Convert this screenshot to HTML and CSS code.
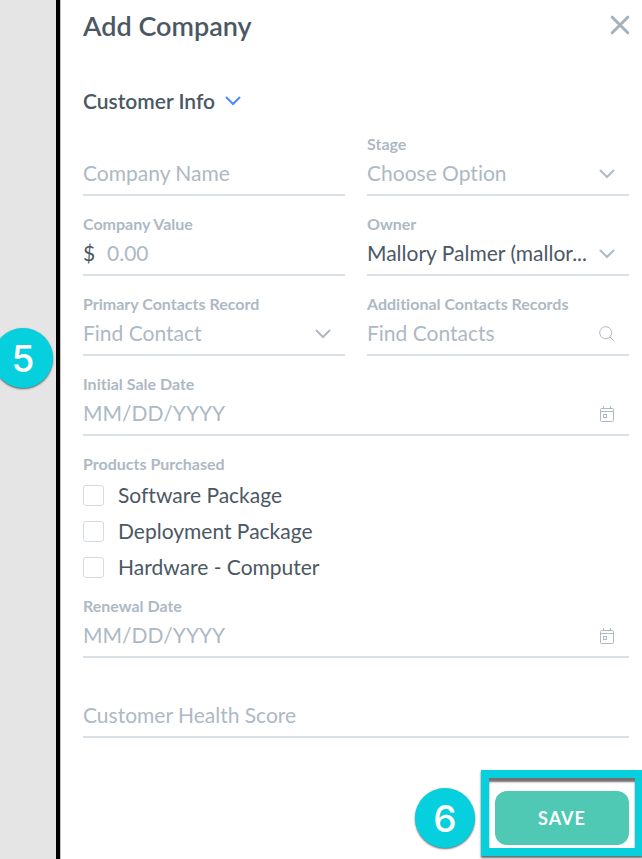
FILE: index.html
```
<!DOCTYPE html>
<html lang="en">
<head>
    <meta charset="UTF-8">
    <meta name="viewport" content="width=device-width, initial-scale=1.0">
    <title>Add Company</title>
    <link rel="stylesheet" href="styles.css">
</head>
<body>
    <div class="page">
        <aside class="backdrop">
            <span class="step step-five">5</span>
        </aside>
        <main class="panel">
            <header class="panel-header">
                <h1>Add Company</h1>
                <button type="button" class="close" aria-label="Close">
                    <svg width="20" height="20" viewBox="0 0 20 20"><path d="M2.2 2.2l15.6 15.6M17.8 2.2L2.2 17.8"/></svg>
                </button>
            </header>
            <h2>
                <button type="button" class="section-toggle">
                    Customer Info
                    <svg class="chevron" width="16" height="10" viewBox="0 0 16 10"><path d="M1.5 1.5l6.5 6.5 6.5-6.5"/></svg>
                </button>
            </h2>

            <form class="company-form">
                <div class="field">
                    <div class="control no-label">
                        <input type="text" id="company-name" aria-label="Company Name" placeholder="Company Name">
                    </div>
                </div>
                <div class="field">
                    <label for="stage">Stage</label>
                    <div class="control">
                        <select id="stage" class="empty">
                            <option>Choose Option</option>
                        </select>
                        <svg class="chevron" width="16" height="10" viewBox="0 0 16 10"><path d="M1.5 1.5l6.5 6.5 6.5-6.5"/></svg>
                    </div>
                </div>
                <div class="field">
                    <label for="company-value">Company Value</label>
                    <div class="control">
                        <span class="currency">$</span>
                        <input type="text" id="company-value" placeholder="0.00">
                    </div>
                </div>
                <div class="field">
                    <label for="owner">Owner</label>
                    <div class="control">
                        <select id="owner">
                            <option>Mallory Palmer (mallor...</option>
                        </select>
                        <svg class="chevron" width="16" height="10" viewBox="0 0 16 10"><path d="M1.5 1.5l6.5 6.5 6.5-6.5"/></svg>
                    </div>
                </div>
                <div class="field">
                    <label for="primary-contact">Primary Contacts Record</label>
                    <div class="control">
                        <select id="primary-contact" class="empty">
                            <option>Find Contact</option>
                        </select>
                        <svg class="chevron" width="16" height="10" viewBox="0 0 16 10"><path d="M1.5 1.5l6.5 6.5 6.5-6.5"/></svg>
                    </div>
                </div>
                <div class="field">
                    <label for="more-contacts">Additional Contacts Records</label>
                    <div class="control">
                        <input type="text" id="more-contacts" placeholder="Find Contacts">
                        <svg class="icon" width="16" height="16" viewBox="0 0 16 16"><circle cx="6.7" cy="6.7" r="6"/><path d="M11 11l4.4 4.4"/></svg>
                    </div>
                </div>
                <div class="field wide">
                    <label for="sale-date">Initial Sale Date</label>
                    <div class="control">
                        <input type="text" id="sale-date" placeholder="MM/DD/YYYY">
                        <svg class="icon" width="16" height="16" viewBox="0 0 16 16"><rect x="1.5" y="2.5" width="13" height="13" rx="1"/><path d="M1.5 5.5h13M4.5 0v3M11.5 0v3"/><rect x="4.5" y="8.5" width="3" height="3"/></svg>
                    </div>
                </div>
                <fieldset class="field wide">
                    <legend>Products Purchased</legend>
                    <div class="options">
                        <label class="option"><input type="checkbox"> Software Package</label>
                        <label class="option"><input type="checkbox"> Deployment Package</label>
                        <label class="option"><input type="checkbox"> Hardware - Computer</label>
                    </div>
                </fieldset>
                <div class="field wide">
                    <label for="renewal-date">Renewal Date</label>
                    <div class="control">
                        <input type="text" id="renewal-date" placeholder="MM/DD/YYYY">
                        <svg class="icon" width="16" height="16" viewBox="0 0 16 16"><rect x="1.5" y="2.5" width="13" height="13" rx="1"/><path d="M1.5 5.5h13M4.5 0v3M11.5 0v3"/><rect x="4.5" y="8.5" width="3" height="3"/></svg>
                    </div>
                </div>
                <div class="field wide">
                    <div class="control no-label">
                        <input type="text" id="health-score" aria-label="Customer Health Score" placeholder="Customer Health Score">
                    </div>
                </div>
                <footer class="actions wide">
                    <span class="step">6</span>
                    <div class="save-wrap">
                        <button type="submit" class="save">SAVE</button>
                        <div class="highlight"></div>
                    </div>
                </footer>
            </form>
        </main>
    </div>
</body>
</html>
```
FILE: styles.css
```
* {
    margin: 0;
    padding: 0;
    box-sizing: border-box;
}

body {
    font-family: 'Lato', sans-serif;
    font-size: 21px;
    font-variant-ligatures: none;
    color: #4b5863;
    background: #fff;
}

button, input, select {
    font: inherit;
    font-variant-ligatures: none;
    color: inherit;
    background: none;
    border: none;
    outline: none;
}

svg {
    fill: none;
    stroke: #adb9c4;
    flex: none;
}

.page {
    display: grid;
    grid-template-columns: 56px 1fr;
    min-height: 100vh;
    overflow: hidden;
}

.backdrop {
    position: relative;
    background: #e5e5e5;
}

.panel {
    border-left: 4px solid #000;
    box-shadow: inset 1px 0 #c4c4c4;
    padding: 0 13px 0 23px;
}

.panel-header {
    display: flex;
    justify-content: space-between;
    align-items: center;
    height: 50px;
}

h1 {
    font-size: 27px;
    font-weight: 600;
}

.close {
    display: flex;
    margin-right: -1px;
}

.close svg {
    stroke: #a5b1bc;
    stroke-width: 3;
    stroke-linecap: round;
}

h2 {
    font-size: 21px;
    font-weight: 600;
    padding-top: 35px;
    height: 66px;
}

.section-toggle {
    display: flex;
    align-items: center;
    gap: 10px;
    line-height: 32px;
}

.chevron {
    stroke-width: 2;
    stroke-linecap: round;
}

.section-toggle .chevron {
    stroke: #4a8cff;
}

.company-form {
    display: grid;
    grid-template-columns: 1fr 1fr;
    column-gap: 22px;
}

.wide {
    grid-column: 1 / -1;
}

.field {
    border: none;
    padding-top: 18px;
    min-width: 0;
}

.field > label, legend {
    display: block;
    font-size: 16px;
    font-weight: 700;
    line-height: 20px;
    color: #adb9c4;
}

.control {
    display: flex;
    align-items: center;
    height: 42px;
    padding-right: 14px;
    border-bottom: 2px solid #dae1e4;
}

.no-label {
    margin-top: 20px;
}

.control input, .control select {
    flex: 1;
    min-width: 0;
    height: 40px;
    padding-bottom: 4px;
    appearance: none;
}

.control select.empty, ::placeholder {
    color: #adb9c4;
    opacity: 1;
}

.currency {
    width: 24px;
    padding-bottom: 4px;
}

legend {
    float: left;
    width: 100%;
}

.options {
    clear: both;
    display: flex;
    flex-direction: column;
    gap: 14px;
    padding-top: 10px;
}

.option {
    display: flex;
    align-items: center;
    gap: 14px;
    line-height: 22px;
}

.option input {
    appearance: none;
    width: 21px;
    height: 21px;
    border: 1px solid #d3dbe0;
    border-radius: 3px;
}

.actions {
    display: flex;
    justify-content: flex-end;
    align-items: center;
    gap: 20px;
    padding: 50px 0 10px;
}

.step {
    display: flex;
    justify-content: center;
    align-items: center;
    width: 60px;
    height: 60px;
    border-radius: 50%;
    background: #06d0de;
    box-shadow: 0 1px 2px rgba(0, 0, 0, 0.6);
    color: #fff;
    font-family: 'Inter', sans-serif;
    font-size: 37px;
    font-weight: 500;
}

/* hangs off the left edge of the window */
.step-five {
    position: absolute;
    left: -7px;
    top: 328px;
}

.save-wrap {
    position: relative;
}

.save {
    display: block;
    width: 134px;
    height: 54px;
    border-radius: 12px;
    background: #4fc8b4;
    color: #fff;
    font-size: 18px;
    font-weight: 700;
    letter-spacing: 1px;
}

.highlight {
    position: absolute;
    inset: -21px -14px -11px;
    border: 8px solid #06d0de;
    box-shadow: 0 2px 2px rgba(0, 0, 0, 0.6), inset 0 4px 2px rgba(60, 50, 50, 0.7);
    pointer-events: none;
}
```
